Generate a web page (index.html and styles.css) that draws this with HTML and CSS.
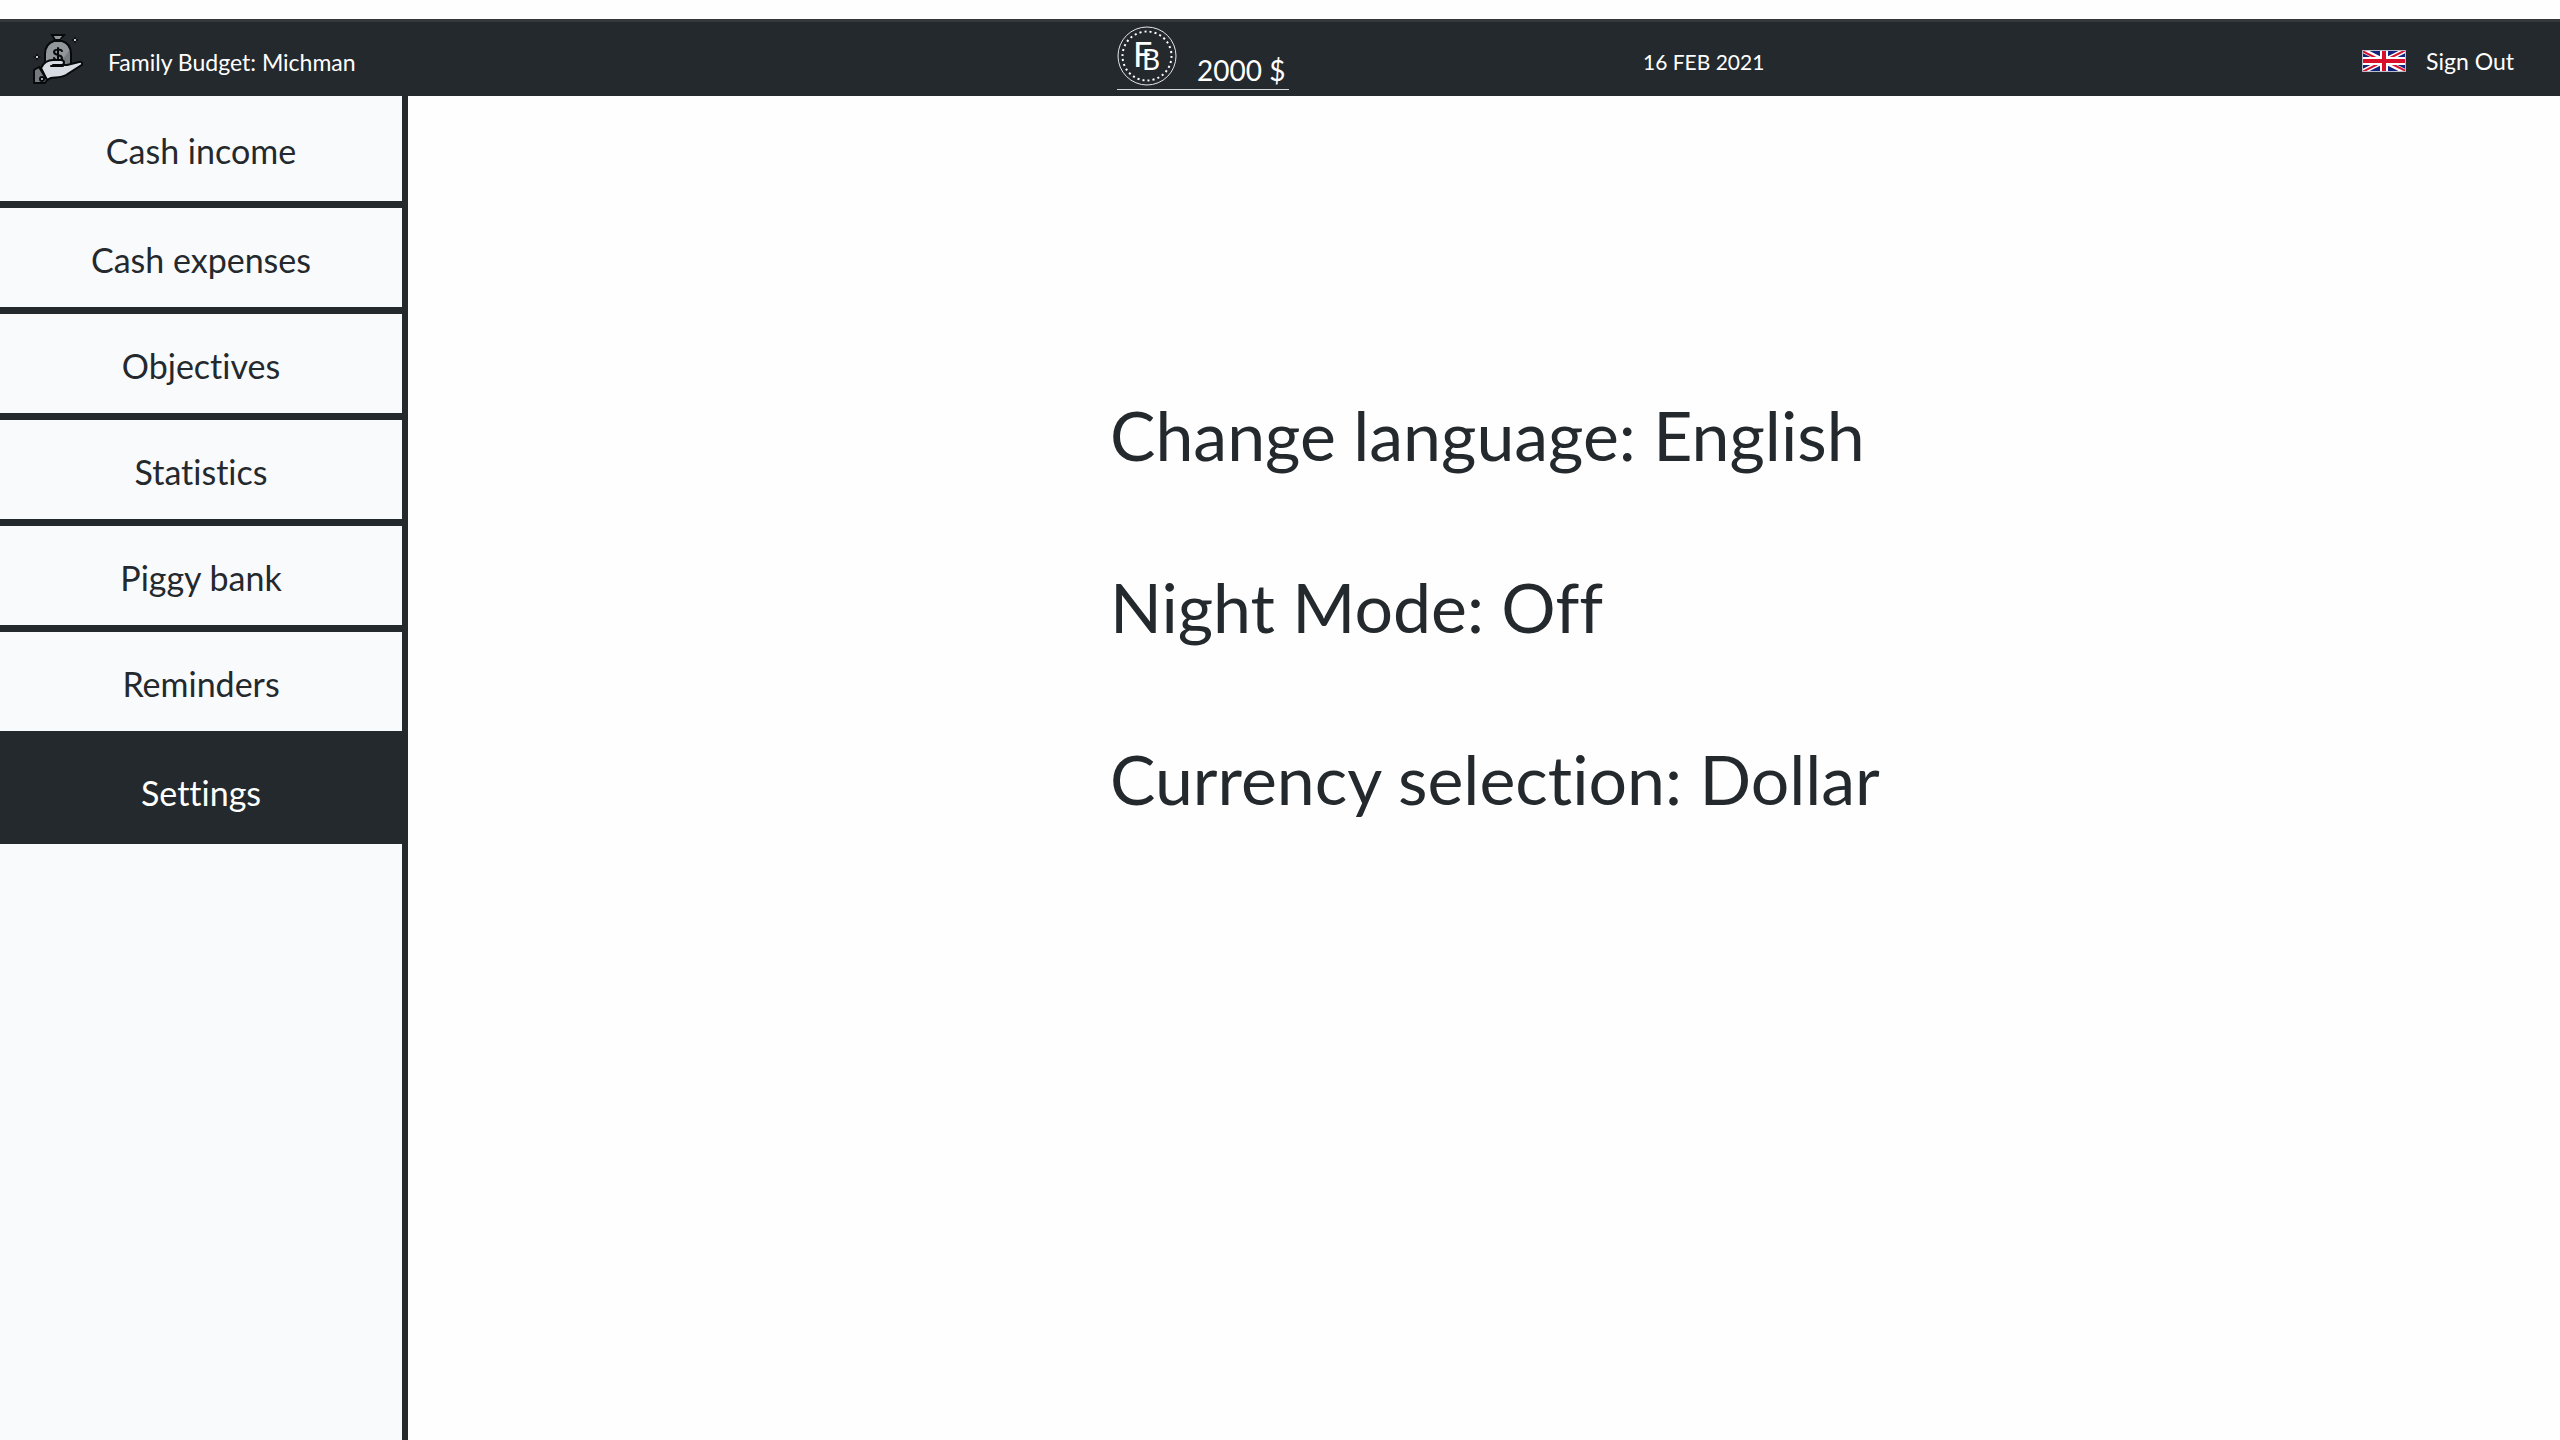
FILE: index.html
```html
<!DOCTYPE html>
<html lang="en">
<head>
<meta charset="utf-8">
<title>Family Budget</title>
<link rel="stylesheet" href="styles.css">
</head>
<body>
<header class="topbar">
  <div class="brand">
    <svg class="brand-icon" viewBox="0 0 50 50" aria-hidden="true">
      <path class="bag" d="M19 1h12l-3 6c9 2 10 8 10 13v13H12V20C12 14 15 9 22 7Z"/>
      <path class="bag-shade" d="M37 16v17H23Z"/>
      <path class="line" d="M19 1h12l-4 5h-5ZM21 7h8c6 2 9 6 9 13v13M12 27v-7c0-7 3-11 9-13"/>
      <path class="line" d="M29 17c-1-2-8-2-8 1 0 4 8 2 8 6 0 3-7 3-8 0M25 14v14"/>
      <path class="hand" d="M8 34c3-6 7-8 12-8h8c4 0 4 5 0 5h-8 14l12-3c4-1 4 3 1 4L33 41c-5 3-11 2-15 3l-4 2Z"/>
      <path class="line" d="M18 32h12"/>
      <path class="cuff" d="M1 49V36l5-3 8 13-2 3Z"/>
      <circle class="button-dot" cx="9" cy="45" r="2"/>
      <path class="spark" d="m42 2 1 3 3 1-3 1-1 3-1-3-3-1 3-1ZM4 19l1 3 3 1-3 1-1 3-1-3-3-1 3-1Z"/>
      <path class="spark-core" d="M41 5h2v2h-2ZM3 22h2v2H3Z"/>
    </svg>
    <span>Family Budget: Michman</span>
  </div>
  <div class="balance">
    <svg class="coin" viewBox="0 0 60 60" aria-hidden="true">
      <circle class="coin-rim" cx="30" cy="30" r="29"/>
      <circle class="coin-dots" cx="30" cy="30" r="24.5" pathLength="150"/>
      <text class="coin-letter" x="16" y="41">F</text>
      <text class="coin-letter coin-small" x="25" y="44">B</text>
    </svg>
    <span>2000 $</span>
  </div>
  <time class="date" datetime="2021-02-16">16 FEB 2021</time>
  <div class="account">
    <button class="flag-button" type="button" aria-label="Language">
      <svg class="flag" viewBox="0 0 44 22" aria-hidden="true">
        <path fill="#14247c" d="M0 0h44v22H0Z"/>
        <path stroke="#fff" stroke-width="5" d="m0 0 44 22M44 0 0 22"/>
        <path stroke="#d8102c" stroke-width="2" d="m0 1 20 10M44 0 24 10M0 22l20-10M44 21 24 11"/>
        <path stroke="#fff" stroke-width="8" d="M22 0v22M0 11h44"/>
        <path stroke="#d8102c" stroke-width="4" d="M22 0v22M0 11h44"/>
        <path fill="none" stroke="#b9bdcc" d="M.5.5h43v21H.5Z"/>
      </svg>
    </button>
    <a class="sign-out" href="#">Sign Out</a>
  </div>
</header>
<div class="layout">
  <nav class="sidebar">
    <a class="nav-item" href="#">Cash income</a>
    <a class="nav-item" href="#">Cash expenses</a>
    <a class="nav-item" href="#">Objectives</a>
    <a class="nav-item" href="#">Statistics</a>
    <a class="nav-item" href="#">Piggy bank</a>
    <a class="nav-item" href="#">Reminders</a>
    <a class="nav-item active" href="#" aria-current="page">Settings</a>
  </nav>
  <main class="settings">
    <p>Change language: English</p>
    <p>Night Mode: Off</p>
    <p>Currency selection: Dollar</p>
  </main>
</div>
</body>
</html>
```
FILE: styles.css
```css
* { box-sizing: border-box; }

body {
  margin: 0;
  padding-top: 19px;
  min-height: 100vh;
  display: flex;
  flex-direction: column;
  background: #fefefe;
  color: #24292d;
  font-family: Lato, "Noto Sans", sans-serif;
  font-variant-ligatures: none;
}

a { color: inherit; text-decoration: none; }

.topbar {
  display: grid;
  grid-template-columns: 1117fr 526fr 917fr;
  grid-template-areas: "brand balance date";
  height: 77px;
  border-top: 3px solid #35373b;
  background: #24292d;
  color: #fff;
  font-size: 23px;
  line-height: 32px;
}

.brand {
  display: flex;
  align-items: center;
  gap: 25px;
  padding: 0 0 0 33px;
}

.brand > span { padding-top: 6px; }

.brand-icon { width: 50px; height: 50px; }
.bag { fill: #92979c; }
.bag-shade { fill: #777c81; }
.line { fill: none; stroke: #07090b; stroke-width: 2; stroke-linecap: round; }
.hand { fill: #d9dde3; stroke: #07090b; stroke-width: 2; stroke-linejoin: round; }
.cuff { fill: #777b80; stroke: #07090b; stroke-width: 2; }
.button-dot { fill: #d9dde3; stroke: #07090b; stroke-width: 2; }
.spark { fill: #07090b; }
.spark-core { fill: #c8ccd0; }

.balance {
  display: flex;
  align-items: flex-end;
  justify-self: start;
  align-self: start;
  gap: 20px;
  height: 68px;
  padding-right: 4px;
  border-bottom: 1px solid #d5d8da;
  font-size: 28px;
  line-height: 38px;
}

.coin { width: 60px; height: 60px; margin-bottom: 3px; }
.coin-rim { fill: none; stroke: #e4e6e8; stroke-width: 1; }
.coin-dots { fill: none; stroke: #fff; stroke-width: 2; stroke-dasharray: 2 3; }
.coin-letter { fill: #fff; font-family: Lato, sans-serif; font-size: 34px; }
.coin-small { font-size: 28px; }

.date { grid-area: date; align-self: center; padding-top: 6px; font-size: 21px; }

.account {
  grid-area: date;
  justify-self: end;
  align-self: center;
  display: flex;
  align-items: center;
  gap: 20px;
  padding: 4px 46px 0 0;
}

.flag-button { padding: 0; border: 0; background: none; }
.flag { display: block; width: 44px; height: 22px; }

.layout { display: flex; flex: 1; }

.sidebar {
  flex: 0 0 408px;
  border-right: 6px solid #24292d;
  background: #f9fafc;
}

.nav-item {
  display: flex;
  align-items: center;
  justify-content: center;
  height: 106px;
  padding-top: 4px;
  border-bottom: 7px solid #24292d;
  font-size: 34px;
  line-height: 40px;
}

.nav-item:first-child { height: 112px; }

.active { border-bottom: 0; background: #24292d; color: #fff; }

.settings { flex: 1; padding: 295px 0 0 702px; font-size: 68px; }
.settings p { margin: 0 0 84px; line-height: 88px; }
```
